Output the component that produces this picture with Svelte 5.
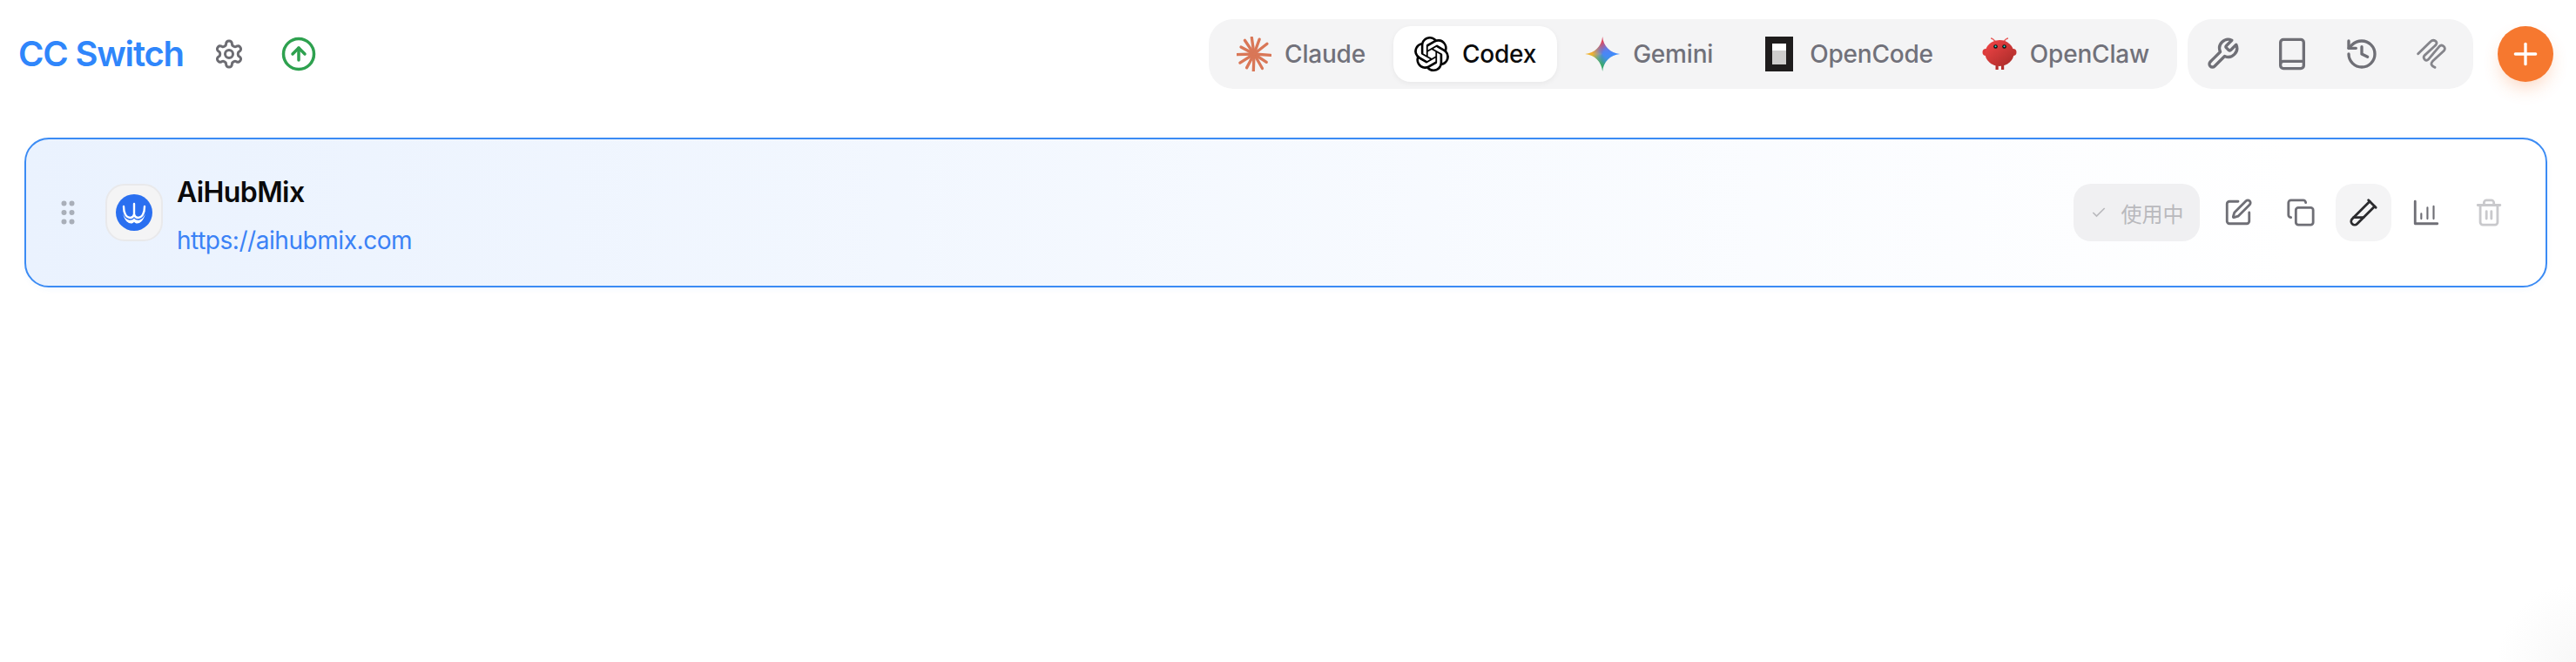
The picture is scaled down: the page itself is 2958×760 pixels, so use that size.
<script>
  const tabs = [
    { id: 'claude', label: 'Claude' },
    { id: 'codex', label: 'Codex', active: true },
    { id: 'gemini', label: 'Gemini' },
    { id: 'opencode', label: 'OpenCode' },
    { id: 'openclaw', label: 'OpenClaw' }
  ];
  const rays = [4, 33, 60, 92, 118, 148, 178, 208, 236, 262, 290, 322];
  const lens = [19, 17, 19, 20, 18, 19, 20, 17, 19, 19, 18, 19];
</script>

<div class="page">
  <header class="header">
    <div class="brand">
      <h1 class="title">CC Switch</h1>
      <button class="plain gear" aria-label="settings">
        <svg class="lucide" viewBox="0 0 24 24">
          <path d="M12.22 2h-.44a2 2 0 0 0-2 2v.18a2 2 0 0 1-1 1.73l-.43.25a2 2 0 0 1-2 0l-.15-.08a2 2 0 0 0-2.73.73l-.22.38a2 2 0 0 0 .73 2.73l.15.1a2 2 0 0 1 1 1.72v.51a2 2 0 0 1-1 1.74l-.15.09a2 2 0 0 0-.73 2.73l.22.38a2 2 0 0 0 2.73.73l.15-.08a2 2 0 0 1 2 0l.43.25a2 2 0 0 1 1 1.73V20a2 2 0 0 0 2 2h.44a2 2 0 0 0 2-2v-.18a2 2 0 0 1 1-1.73l.43-.25a2 2 0 0 1 2 0l.15.08a2 2 0 0 0 2.73-.73l.22-.39a2 2 0 0 0-.73-2.73l-.15-.08a2 2 0 0 1-1-1.74v-.5a2 2 0 0 1 1-1.74l.15-.09a2 2 0 0 0 .73-2.73l-.22-.38a2 2 0 0 0-2.73-.73l-.15.08a2 2 0 0 1-2 0l-.43-.25a2 2 0 0 1-1-1.73V4a2 2 0 0 0-2-2z"/>
          <circle cx="12" cy="12" r="3"/>
        </svg>
      </button>
      <button class="plain up" aria-label="update">
        <svg class="lucide" viewBox="0 0 24 24">
          <circle cx="12" cy="12" r="10"/><path d="m16 12-4-4-4 4"/><path d="M12 16V8"/>
        </svg>
      </button>
    </div>

    <div class="right">
      <nav class="group apps">
        {#each tabs as t}
          <button class="tab" class:active={t.active}>
            {#if t.id === 'claude'}
              <svg class="logo" viewBox="0 0 40 40">
                {#each rays as a, i}
                  <line x1="20" y1="20" x2={20 + lens[i] * Math.cos((a * Math.PI) / 180)} y2={20 + lens[i] * Math.sin((a * Math.PI) / 180)} class="ray" />
                {/each}
              </svg>
            {:else if t.id === 'codex'}
              <svg class="logo" viewBox="0 0 24 24">
                <path d="M22.2819 9.8211a5.9847 5.9847 0 0 0-.5157-4.9108 6.0462 6.0462 0 0 0-6.5098-2.9A6.0651 6.0651 0 0 0 4.9807 4.1818a5.9847 5.9847 0 0 0-3.9977 2.9 6.0462 6.0462 0 0 0 .7427 7.0966 5.98 5.98 0 0 0 .511 4.9107 6.051 6.051 0 0 0 6.5146 2.9001A5.9847 5.9847 0 0 0 13.2599 24a6.0557 6.0557 0 0 0 5.7718-4.2058 5.9894 5.9894 0 0 0 3.9977-2.9001 6.0557 6.0557 0 0 0-.7475-7.0729zm-9.022 12.6081a4.4755 4.4755 0 0 1-2.8764-1.0408l.1419-.0804 4.7783-2.7582a.7948.7948 0 0 0 .3927-.6813v-6.7369l2.02 1.1686a.071.071 0 0 1 .038.052v5.5826a4.504 4.504 0 0 1-4.4945 4.4944zm-9.6607-4.1254a4.4708 4.4708 0 0 1-.5346-3.0137l.142.0852 4.783 2.7582a.7712.7712 0 0 0 .7806 0l5.8428-3.3685v2.3324a.0804.0804 0 0 1-.0332.0615L9.74 19.9502a4.4992 4.4992 0 0 1-6.1408-1.6464zM2.3408 7.8956a4.485 4.485 0 0 1 2.3655-1.9728V11.6a.7664.7664 0 0 0 .3879.6765l5.8144 3.3543-2.0201 1.1685a.0757.0757 0 0 1-.071 0l-4.8303-2.7865A4.504 4.504 0 0 1 2.3408 7.872zm16.5963 3.8558L13.1038 8.364 15.1192 7.2a.0757.0757 0 0 1 .071 0l4.8303 2.7913a4.4944 4.4944 0 0 1-.6765 8.1042v-5.6772a.79.79 0 0 0-.407-.667zm2.0107-3.0231l-.142-.0852-4.7735-2.7818a.7759.7759 0 0 0-.7854 0L9.409 9.2297V6.8974a.0662.0662 0 0 1 .0284-.0615l4.8303-2.7866a4.4992 4.4992 0 0 1 6.6802 4.66zM8.3065 12.863l-2.02-1.1638a.0804.0804 0 0 1-.038-.0567V6.0742a4.4992 4.4992 0 0 1 7.3757-3.4537l-.142.0805L8.704 5.459a.7948.7948 0 0 0-.3927.6813zm1.0976-2.3654l2.602-1.4998 2.6069 1.4998v2.9994l-2.5974 1.4997-2.6067-1.4997Z"/>
              </svg>
            {:else if t.id === 'gemini'}
              <span class="logo gemini"></span>
            {:else if t.id === 'opencode'}
              <svg class="logo" viewBox="0 0 240 300">
                <path class="oc-top" d="M60 60h120v60H60z"/>
                <path class="oc-mid" d="M60 120h120v120H60z"/>
                <path class="oc-frame" fill-rule="evenodd" d="M0 0h240v300H0zM60 60v180h120V60z"/>
              </svg>
            {:else}
              <svg class="logo" viewBox="0 0 40 40">
                <defs>
                  <linearGradient id="claw" x1="0.15" y1="0.1" x2="0.85" y2="0.9">
                    <stop offset="0" stop-color="#ea4243"/><stop offset="1" stop-color="#b02e2c"/>
                  </linearGradient>
                </defs>
                <path class="claw-ant" d="M10 2c2 0 3.500 1.500 5 3.500M30 2c-2 0-3.500 1.500-5 3.500"/>
                <circle cx="4.500" cy="18" r="4" fill="#dc3a3a"/>
                <circle cx="35.500" cy="18" r="4" fill="#c13432"/>
                <rect x="15.500" y="31" width="3.200" height="7" fill="#b52f2d"/>
                <rect x="22" y="31" width="3.200" height="7" fill="#b52f2d"/>
                <ellipse cx="20" cy="19" rx="16.500" ry="15" fill="url(#claw)"/>
                <circle cx="15.500" cy="11.500" r="2.300" fill="#111"/>
                <circle cx="25.500" cy="11.500" r="2.300" fill="#111"/>
                <circle cx="15.500" cy="11.200" r="1" fill="#2ee6d6"/>
                <circle cx="25.500" cy="11.200" r="1" fill="#2ee6d6"/>
              </svg>
            {/if}
            <span>{t.label}</span>
          </button>
        {/each}
      </nav>

      <div class="group tools">
        <button class="tool" aria-label="tools">
          <svg class="lucide" viewBox="0 0 24 24"><path d="M14.7 6.3a1 1 0 0 0 0 1.4l1.6 1.6a1 1 0 0 0 1.4 0l3.77-3.77a6 6 0 0 1-7.94 7.94l-6.91 6.91a2.12 2.12 0 0 1-3-3l6.91-6.91a6 6 0 0 1 7.94-7.94l-3.76 3.76z"/></svg>
        </button>
        <button class="tool" aria-label="prompts">
          <svg class="lucide" viewBox="0 0 24 24"><path d="M4 19V4a2 2 0 0 1 2-2h12a2 2 0 0 1 2 2v16a2 2 0 0 1-2 2H6a2 2 0 0 1-2-2v-1a2 2 0 0 1 2-2h14"/></svg>
        </button>
        <button class="tool" aria-label="history">
          <svg class="lucide" viewBox="0 0 24 24"><path d="M3 12a9 9 0 1 0 9-9 9.75 9.75 0 0 0-6.74 2.74L3 8"/><path d="M3 3v5h5"/><path d="M12 7v5l4 2"/></svg>
        </button>
        <button class="tool" aria-label="skills">
          <svg class="lucide thin" viewBox="0 0 24 24"><path d="M2.800 11.800 11.400 3.400C13.400 1.400 17 3.400 15 5.800L7.400 12.800C5.600 14.600 8 17.600 9.800 15.800L17.400 6.800C19.400 4.800 22.600 7.600 20.600 9.800L12.800 17C11.200 18.800 12 20.200 14.400 21.200"/></svg>
        </button>
      </div>

      <button class="add" aria-label="add">
        <svg class="lucide" viewBox="0 0 24 24"><path d="M5 12h14"/><path d="M12 5v14"/></svg>
      </button>
    </div>
  </header>

  <main class="main">
    <article class="card">
      <svg class="grip" viewBox="0 0 24 24"><circle cx="9" cy="12" r="1"/><circle cx="9" cy="5" r="1"/><circle cx="9" cy="19" r="1"/><circle cx="15" cy="12" r="1"/><circle cx="15" cy="5" r="1"/><circle cx="15" cy="19" r="1"/></svg>
      <div class="tile">
        <svg viewBox="0 0 42 42" class="hub">
          <circle cx="21" cy="21" r="21" class="hub-bg"/>
          <path class="hub-line" d="M9 14C9 22 12 27 16.500 27C18.800 27 20.200 25.500 21 23.500C21.800 25.500 23.200 27 25.500 27C30 27 33 22 33 14"/>
          <path class="hub-line" d="M21 11V23.500"/>
          <path class="hub-fill" d="M8 22C10 30 14 33.500 17.500 33.500C19 33.500 20.200 32.800 21 31.700C21.800 32.800 23 33.500 24.500 33.500C28 33.500 32 30 34 22C32 27.500 28.500 29.800 25.500 29.800C23.500 29.800 22 29 21 27.600C20 29 18.500 29.800 16.500 29.800C13.500 29.800 10 27.500 8 22Z"/>
        </svg>
      </div>
      <div class="info">
        <h3 class="name">AiHubMix</h3>
        <a class="url" href="https://aihubmix.com">https://aihubmix.com</a>
      </div>
      <div class="actions">
        <button class="using">
          <svg class="check" viewBox="0 0 24 24"><path d="M20 6 9 17l-5-5"/></svg>
          <span>使用中</span>
        </button>
        <button class="act" aria-label="edit">
          <svg class="lucide" viewBox="0 0 24 24"><path d="M12 3H5a2 2 0 0 0-2 2v14a2 2 0 0 0 2 2h14a2 2 0 0 0 2-2v-7"/><path d="M18.375 2.625a1 1 0 0 1 3 3l-9.013 9.014a2 2 0 0 1-.853.505l-2.873.84a.5.5 0 0 1-.62-.62l.84-2.873a2 2 0 0 1 .506-.852z"/></svg>
        </button>
        <button class="act" aria-label="copy">
          <svg class="lucide" viewBox="0 0 24 24"><rect x="8" y="8" width="14" height="14" rx="2"/><path d="M4 16c-1.100 0-2-.9-2-2V4c0-1.100.9-2 2-2h10c1.100 0 2 .9 2 2"/></svg>
        </button>
        <button class="act hover" aria-label="test">
          <svg class="lucide" viewBox="0 0 24 24"><path d="M21 7 6.820 21.180a2.830 2.830 0 0 1-3.990-.01a2.830 2.830 0 0 1 0-4L17 3"/><path d="m16 2 6 6"/><path d="M12 16H4"/></svg>
        </button>
        <button class="act" aria-label="usage">
          <svg class="lucide" viewBox="0 0 24 24"><path d="M3 3v18h18"/><path class="fine" d="M8 17v-4M13 17V8M18 17V7"/></svg>
        </button>
        <button class="act off" aria-label="delete">
          <svg class="lucide" viewBox="0 0 24 24"><path d="M3 6h18"/><path d="M19 6v14c0 1-1 2-2 2H7c-1 0-2-1-2-2V6"/><path d="M8 6V4c0-1 1-2 2-2h4c1 0 2 1 2 2v2"/><path d="M10 11v6M14 11v6"/></svg>
        </button>
      </div>
    </article>
  </main>
</div>

<style>
  :global(body) {
    margin: 0;
    background: #fff;
    font-family: Inter, "Noto Sans CJK SC", sans-serif;
  }
  button {
    border: 0;
    background: none;
    padding: 0;
    font: inherit;
    display: flex;
    align-items: center;
    justify-content: center;
  }
  .page {
    width: 2958px;
    height: 760px;
    overflow: hidden;
    background: radial-gradient(circle at 100% 100%, #f8f8f8 0, #ffffff 90px);
  }
  .lucide {
    fill: none;
    stroke: currentColor;
    stroke-width: 2;
    stroke-linecap: round;
    stroke-linejoin: round;
    display: block;
  }
  .header {
    display: flex;
    justify-content: space-between;
    padding: 22px 26px 56px 21px;
  }
  .brand {
    display: flex;
    align-items: center;
  }
  .title {
    margin: 0;
    font-size: 40px;
    font-weight: 600;
    letter-spacing: -1.200px;
    color: #2f86fb;
    line-height: 80px;
  }
  .gear {
    width: 36px;
    height: 36px;
    margin-left: 34px;
    color: #6c6c72;
  }
  .gear .lucide { width: 36px; height: 36px; }
  .up {
    margin-left: 41px;
    color: #2ea14f;
  }
  .up .lucide { width: 42px; height: 42px; }
  .right {
    display: flex;
    align-items: center;
    gap: 12px;
  }
  .group {
    display: flex;
    height: 80px;
    box-sizing: border-box;
    align-items: center;
    background: #f4f4f5;
    border-radius: 28px;
  }
  .apps {
    padding: 8px;
    gap: 8px;
  }
  .tab {
    height: 64px;
    padding: 0 24px;
    gap: 15px;
    border-radius: 20px;
    font-size: 28px;
    font-weight: 500;
    letter-spacing: -0.200px;
    color: #71717a;
  }
  .tab.active {
    background: #fff;
    color: #0b0b0c;
    box-shadow: 0 2px 6px rgba(0, 0, 0, 0.05);
  }
  .logo {
    width: 40px;
    height: 40px;
    display: block;
    flex: none;
  }
  .ray {
    stroke: #d97757;
    stroke-width: 3.300;
    stroke-linecap: round;
  }
  .gemini {
    background:
      radial-gradient(circle at 55% 48%, #4a86f5 0, rgba(74, 134, 245, 0) 45%),
      conic-gradient(from 0deg, #e0455c 0deg, #7f6fd8 40deg, #3d8bfd 90deg, #3a9be0 130deg, #36a86b 180deg, #6aba4c 220deg, #f2b32f 270deg, #e4784a 320deg, #e0455c 360deg);
    clip-path: path("M20 0C21 11 29 19 40 20C29 21 21 29 20 40C19 29 11 21 0 20C11 19 19 11 20 0Z");
  }
  .oc-top { fill: #fff; }
  .oc-mid { fill: #cfcecd; }
  .oc-frame { fill: #1f1d1d; }
  .claw-ant {
    fill: none;
    stroke: #e8605f;
    stroke-width: 1.400;
  }
  .tools {
    padding: 8px 12px 8px 4px;
    gap: 8px;
  }
  .tool {
    width: 72px;
    height: 64px;
    color: #6f6f76;
  }
  .tool .lucide { width: 40px; height: 40px; }
  .tool .thin { stroke-width: 1.700; color: #85858b; }
  .add {
    width: 64px;
    height: 64px;
    margin-left: 16px;
    border-radius: 50%;
    background: #f6782f;
    color: #fff;
    box-shadow: 0 10px 20px -4px rgba(246, 120, 47, 0.3);
  }
  .add .lucide { width: 40px; height: 40px; }
  .main {
    padding: 0 33px 0 28px;
  }
  .card {
    height: 172px;
    display: flex;
    align-items: center;
    box-sizing: border-box;
    border: 2px solid #3b8bf4;
    border-radius: 28px;
    background: linear-gradient(90deg, #eaf2fe 0%, #ffffff 90%);
    box-shadow: 0 2px 6px rgba(59, 130, 246, 0.06);
    padding: 0 33px 0 30px;
  }
  .grip {
    width: 36px;
    height: 36px;
    flex: none;
    fill: #a9afb9;
    stroke: #a9afb9;
    stroke-width: 2;
  }
  .tile {
    width: 66px;
    height: 66px;
    margin-left: 25px;
    box-sizing: border-box;
    border: 2px solid #e9e9eb;
    border-radius: 22px;
    background: #f4f4f5;
    display: flex;
    align-items: center;
    justify-content: center;
    flex: none;
  }
  .hub { width: 42px; height: 42px; display: block; }
  .hub-bg { fill: #2a6ff0; }
  .hub-fill { fill: #fff; }
  .hub-line {
    fill: none;
    stroke: #fff;
    stroke-width: 2.400;
    stroke-linecap: round;
  }
  .info {
    margin-left: 16px;
    padding-top: 6px;
    flex: 1;
    display: flex;
    flex-direction: column;
    gap: 13px;
  }
  .name {
    margin: 0;
    font-size: 32px;
    line-height: 44px;
    font-weight: 600;
    letter-spacing: -0.600px;
    color: #0a0a0b;
  }
  .url {
    font-size: 28px;
    line-height: 40px;
    letter-spacing: -0.450px;
    color: #3b82f6;
    text-decoration: none;
  }
  .actions {
    display: flex;
    align-items: center;
    gap: 8px;
  }
  .using {
    width: 145px;
    height: 66px;
    margin-right: 4px;
    border-radius: 20px;
    background: #f0f0f2;
    color: #b9b9bd;
    font-size: 24px;
    gap: 16px;
  }
  .check {
    width: 20px;
    height: 20px;
    fill: none;
    stroke: currentColor;
    stroke-width: 2;
  }
  .act {
    width: 64px;
    height: 66px;
    border-radius: 20px;
    color: #6f6f76;
  }
  .act .lucide { width: 34px; height: 34px; }
  .act.hover {
    background: #f4f4f5;
    color: #2b2b2e;
  }
  .act.off { color: #c9c9cc; }
  .fine { stroke-width: 1.500; }
</style>
